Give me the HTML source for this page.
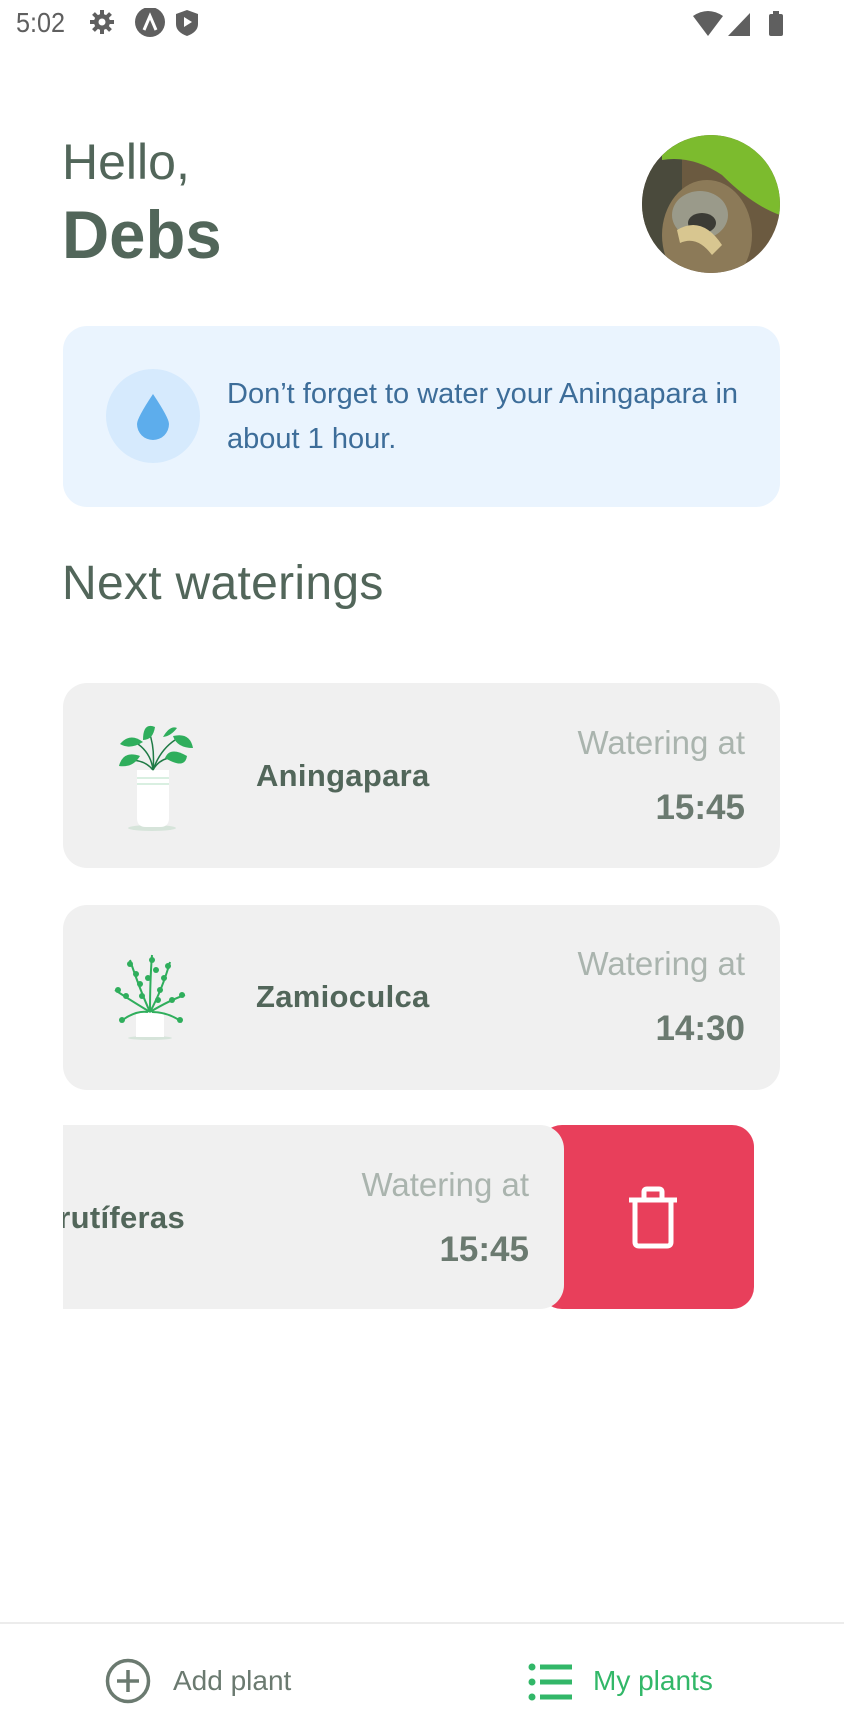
<!DOCTYPE html>
<html><head><meta charset="utf-8"><style>
*{margin:0;padding:0;box-sizing:border-box}
body{width:844px;height:1728px;background:#fff;position:relative;overflow:hidden;font-family:"Liberation Sans",sans-serif}
.abs{position:absolute}
.card{position:absolute;left:63px;width:717px;height:185px;background:#f0f0f0;border-radius:24px}
.name{position:absolute;font-weight:bold;font-size:31px;color:#52665a;letter-spacing:0.3px}
.wat{position:absolute;font-size:33px;color:#aab4ae;text-align:right}
.time{position:absolute;font-size:35px;font-weight:bold;color:#6b7a70;text-align:right}
</style></head><body>
<!-- status bar -->
<div class="abs" style="left:16px;top:7px;font-size:28px;color:#5f5f5f;transform:scaleX(.9);transform-origin:left">5:02</div>
<svg class="abs" style="left:86px;top:8px" width="130" height="30" viewBox="0 0 130 30">
<g fill="#5f5f5f">
<circle cx="16" cy="14" r="8"/>
<g stroke="#5f5f5f" stroke-width="4"><line x1="16" y1="2" x2="16" y2="26"/><line x1="4" y1="14" x2="28" y2="14"/><line x1="7.5" y1="5.5" x2="24.5" y2="22.5"/><line x1="24.5" y1="5.5" x2="7.5" y2="22.5"/></g>
<circle cx="16" cy="14" r="3.5" fill="#fff"/>
<circle cx="64" cy="14" r="15"/>
<path d="M58 22 L64 8 L70 22" stroke="#fff" stroke-width="3" fill="none"/>
<path d="M101 2 L112 6 L112 16 Q112 24 101 28 Q90 24 90 16 L90 6 Z"/>
<path d="M98 9 L106 14 L98 19 Z" fill="#fff"/>
</g></svg>
<svg class="abs" style="left:690px;top:10px" width="100" height="48" viewBox="0 0 100 48">
<g fill="#5f5f5f"><path d="M3 6 Q18 -4 33 6 L18 26 Z"/><path d="M38 26 L60 26 L60 3 Z"/><rect x="79" y="4" width="14" height="22" rx="2"/><rect x="83" y="1" width="6" height="4"/></g></svg>

<!-- header -->
<div class="abs" style="left:62px;top:133px;font-size:50px;color:#52665a">Hello,</div>
<div class="abs" style="left:62px;top:196px;font-size:68px;font-weight:bold;color:#52665a;transform:scaleX(.96);transform-origin:left">Debs</div>
<svg class="abs" style="left:642px;top:135px" width="138" height="138" viewBox="0 0 138 138">
<defs><clipPath id="c"><circle cx="69" cy="69" r="69"/></clipPath></defs>
<g clip-path="url(#c)">
<rect width="138" height="138" fill="#6b5a40"/>
<rect x="0" y="0" width="40" height="138" fill="#4a4a3c"/>
<ellipse cx="65" cy="100" rx="45" ry="55" fill="#8c7a58"/>
<ellipse cx="58" cy="80" rx="28" ry="24" fill="#9a9a8a"/>
<ellipse cx="60" cy="88" rx="14" ry="10" fill="#3b3b35"/>
<path d="M35 95 Q60 80 80 110 L70 120 Q55 100 38 108 Z" fill="#d8c690"/>
<path d="M20 0 L138 0 L138 80 Q110 70 80 40 Q50 20 20 25 Z" fill="#7cbb2e"/>
</g></svg>

<!-- alert card -->
<div class="abs" style="left:63px;top:326px;width:717px;height:181px;background:#eaf4fe;border-radius:24px"></div>
<div class="abs" style="left:106px;top:369px;width:94px;height:94px;border-radius:50%;background:#d6eafd"></div>
<svg class="abs" style="left:133px;top:392px" width="40" height="50" viewBox="0 0 40 50"><path d="M20 2 Q36 26 36 32 A16 16 0 0 1 4 32 Q4 26 20 2Z" fill="#5dadec"/></svg>
<div class="abs" style="left:227px;top:372px;width:540px;font-size:29px;line-height:45px;color:#3d6d99;white-space:nowrap">Don’t forget to water your Aningapara in<br>about 1 hour.</div>

<div class="abs" style="left:62px;top:556px;font-size:48px;color:#52665a;letter-spacing:0.3px">Next waterings</div>

<!-- card 1 -->
<div class="card" style="top:683px"></div>
<svg class="abs" style="left:115px;top:722px" width="85" height="110" viewBox="0 0 85 110">
<ellipse cx="37" cy="106" rx="24" ry="3" fill="#d6e4da"/>
<path d="M22 48 L54 48 L54 96 Q54 105 45 105 L31 105 Q22 105 22 96Z" fill="#fff"/>
<rect x="22" y="55" width="32" height="2" fill="#d9efe1"/><rect x="22" y="61" width="32" height="2" fill="#d9efe1"/>
<g stroke="#1f7a45" stroke-width="1.5" fill="none"><path d="M38 48 Q36 30 20 20"/><path d="M38 48 Q40 25 34 10"/><path d="M38 48 Q45 28 60 18"/><path d="M38 48 Q45 35 62 35"/><path d="M38 48 Q30 38 15 38"/></g>
<g fill="#2fae5c"><path d="M5 22 Q15 10 28 20 Q15 28 5 22Z"/><path d="M28 18 Q28 0 40 5 Q38 18 28 18Z"/><path d="M58 14 Q75 10 78 26 Q62 26 58 14Z"/><path d="M48 15 Q55 3 62 6 Q56 14 48 15Z"/><path d="M4 44 Q8 28 25 34 Q18 46 4 44Z"/><path d="M50 36 Q55 24 72 34 Q70 48 50 36Z"/></g>
</svg>
<div class="name" style="left:256px;top:758px">Aningapara</div>
<div class="wat" style="right:99px;top:724px">Watering at</div>
<div class="time" style="right:99px;top:788px">15:45</div>

<!-- card 2 -->
<div class="card" style="top:905px"></div>
<svg class="abs" style="left:110px;top:950px" width="85" height="92" viewBox="0 0 85 92">
<ellipse cx="40" cy="88" rx="22" ry="2" fill="#d6e4da"/>
<rect x="26" y="62" width="28" height="25" fill="#fff"/>
<g stroke="#2fae5c" stroke-width="2" fill="none"><path d="M40 62 Q30 40 20 10"/><path d="M40 62 Q40 30 42 5"/><path d="M40 62 Q52 40 60 12"/><path d="M40 62 Q20 50 5 40"/><path d="M40 62 Q60 50 75 45"/><path d="M38 62 Q25 60 10 72"/><path d="M42 62 Q58 62 72 72"/></g>
<g fill="#2fae5c"><circle cx="20" cy="14" r="3"/><circle cx="26" cy="24" r="3"/><circle cx="30" cy="34" r="3"/><circle cx="42" cy="10" r="3"/><circle cx="46" cy="20" r="3"/><circle cx="38" cy="28" r="3"/><circle cx="58" cy="16" r="3"/><circle cx="54" cy="28" r="3"/><circle cx="50" cy="40" r="3"/><circle cx="8" cy="40" r="3"/><circle cx="16" cy="46" r="3"/><circle cx="72" cy="45" r="3"/><circle cx="62" cy="50" r="3"/><circle cx="12" cy="70" r="3"/><circle cx="70" cy="70" r="3"/><circle cx="32" cy="46" r="3"/><circle cx="48" cy="50" r="3"/></g>
</svg>
<div class="name" style="left:256px;top:979px">Zamioculca</div>
<div class="wat" style="right:99px;top:945px">Watering at</div>
<div class="time" style="right:99px;top:1009px">14:30</div>

<!-- card 3 swiped -->
<div class="abs" style="left:540px;top:1125px;width:214px;height:184px;background:#e83f5b;border-radius:22px"></div>
<div class="abs" style="left:63px;top:1125px;width:501px;height:184px;background:#f0f0f0;border-radius:0 24px 24px 0"></div>
<div class="name" style="left:63px;top:1200px;width:122px;overflow:hidden;direction:rtl;white-space:nowrap">rutíferas</div>
<div class="wat" style="right:315px;top:1166px">Watering at</div>
<div class="time" style="right:315px;top:1230px">15:45</div>
<svg class="abs" style="left:626px;top:1186px" width="54" height="64" viewBox="0 0 54 64"><g stroke="#fff" stroke-width="5" fill="none" stroke-linejoin="round"><path d="M3 14 L51 14"/><path d="M18 14 L18 6 Q18 3 21 3 L33 3 Q36 3 36 6 L36 14"/><path d="M9 14 L9 56 Q9 60 13 60 L41 60 Q45 60 45 56 L45 14"/></g></svg>

<!-- bottom nav -->
<div class="abs" style="left:0;top:1622px;width:844px;height:2px;background:#ececec"></div>
<svg class="abs" style="left:105px;top:1658px" width="46" height="46" viewBox="0 0 46 46"><circle cx="23" cy="23" r="20.5" stroke="#6b7a70" stroke-width="3.5" fill="none"/><path d="M23 12 V34 M12 23 H34" stroke="#6b7a70" stroke-width="3.5"/></svg>
<div class="abs" style="left:173px;top:1665px;font-size:28px;color:#6b7a70">Add plant</div>
<svg class="abs" style="left:528px;top:1662px" width="46" height="40" viewBox="0 0 46 40"><g fill="#32b768"><circle cx="4" cy="5" r="3.5"/><circle cx="4" cy="20" r="3.5"/><circle cx="4" cy="35" r="3.5"/><rect x="12" y="2.5" width="32" height="5"/><rect x="12" y="17.5" width="32" height="5"/><rect x="12" y="32.5" width="32" height="5"/></g></svg>
<div class="abs" style="left:593px;top:1665px;font-size:28px;color:#32b768">My plants</div>
</body></html>
